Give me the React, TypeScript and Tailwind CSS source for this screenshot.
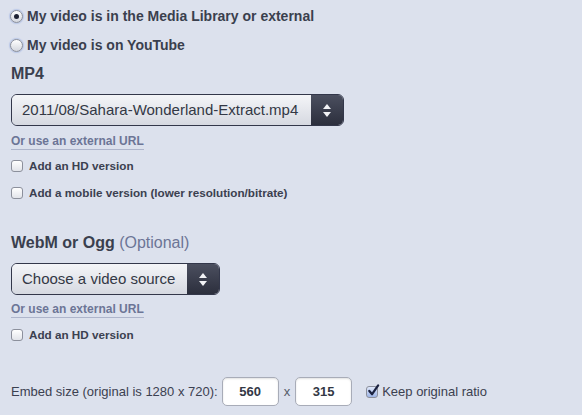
import React from 'react';

function Radio({ checked }: { checked?: boolean }) {
  return (
    <span className="flex h-[13px] w-[13px] items-center justify-center rounded-full border border-[#8a8f9c] bg-gradient-to-b from-[#ffffff] to-[#d4d7de] shadow-[0_0_1px_1px_rgba(120,150,220,0.35)]">
      {checked && <span className="h-[5px] w-[5px] rounded-full bg-[#1e2233]" />}
    </span>
  );
}

function Check({ checked }: { checked?: boolean }) {
  return (
    <span
      className={`relative flex h-[12px] w-[12px] shrink-0 items-center justify-center rounded-[3px] border border-[#8c909c] bg-gradient-to-b ${
        checked ? 'from-[#dfe8fb] to-[#9fb5e6]' : 'from-[#ffffff] to-[#e2e4ea]'
      }`}
    >
      {checked && (
        <svg viewBox="0 0 14 14" className="absolute -top-[3px] left-[0px] h-[13px] w-[13px]">
          <path d="M2.5 7.5 L5.5 11 L12 1.5" fill="none" stroke="#1b2240" strokeWidth="2.4" strokeLinecap="round" strokeLinejoin="round" />
        </svg>
      )}
    </span>
  );
}

function Select({ label, width }: { label: string; width: string }) {
  return (
    <div className={`flex h-[32px] ${width} overflow-hidden rounded-[6px] border border-[#33374a]`}>
      <div className="flex flex-1 items-center bg-gradient-to-b from-[#f4f5f8] to-[#d6d9e1] pl-[10px] text-[15px] text-[#333845]">
        {label}
      </div>
      <div className="flex w-[32px] flex-col items-center justify-center gap-[3px] bg-gradient-to-b from-[#4b4f5f] to-[#2c2f3d]">
        <svg viewBox="0 0 8 5" className="h-[5px] w-[8px]">
          <path d="M4 0 L8 5 L0 5 Z" fill="#f2f3f6" />
        </svg>
        <svg viewBox="0 0 8 5" className="h-[5px] w-[8px]">
          <path d="M0 0 L8 0 L4 5 Z" fill="#f2f3f6" />
        </svg>
      </div>
    </div>
  );
}

function Link({ mt }: { mt: string }) {
  return (
    <div className={`${mt} flex`}>
      <span className="border-b border-[#aeb5cb] pb-[1px] text-[12px] font-bold leading-[14px] text-[#6c7596]">
        Or use an external URL
      </span>
    </div>
  );
}

function CheckRow({ label }: { label: string }) {
  return (
    <label className="flex items-center gap-[6px] text-[11.7px] font-bold leading-[14px] text-[#3b4050]">
      <Check />
      {label}
    </label>
  );
}

function SizeInput({ value }: { value: string }) {
  return (
    <div className="flex h-[29px] w-[57px] items-center justify-center rounded-[5px] border border-[#a8acb8] bg-white text-[13px] font-bold text-[#333845] shadow-[inset_0_1px_2px_rgba(0,0,0,0.12)]">
      {value}
    </div>
  );
}

export default function App() {
  return (
    <div
      className="h-[415px] w-[582px] bg-[#dce1ed] pl-[11px] pt-[9px] text-[#3a3f4e]"
      style={{ fontFamily: '"Liberation Sans", Arial, sans-serif' }}
    >
      <div className="flex items-center gap-[4px] text-[14px] font-bold leading-[14px]">
        <span className="-ml-[1px]"><Radio checked /></span>
        My video is in the Media Library or external
      </div>
      <div className="mt-[15px] flex items-center gap-[4px] text-[14px] font-bold leading-[14px]">
        <span className="-ml-[1px]"><Radio /></span>
        My video is on YouTube
      </div>

      <div className="mt-[13px] text-[16px] font-bold leading-[18px]">MP4</div>
      <div className="mt-[11px]">
        <Select label="2011/08/Sahara-Wonderland-Extract.mp4" width="w-[333px]" />
      </div>
      <Link mt="mt-[8px]" />
      <div className="mt-[9px] flex flex-col gap-[13px]">
        <CheckRow label="Add an HD version" />
        <CheckRow label="Add a mobile version (lower resolution/bitrate)" />
      </div>

      <div className="mt-[34px] text-[16px] font-bold leading-[18px]">
        WebM or Ogg <span className="font-normal text-[#6c7596]">(Optional)</span>
      </div>
      <div className="mt-[11px]">
        <Select label="Choose a video source" width="w-[209px]" />
      </div>
      <Link mt="mt-[7px]" />
      <div className="mt-[10px]">
        <CheckRow label="Add an HD version" />
      </div>

      <div className="mt-[35px] flex items-center text-[13px] leading-[16px] text-[#3b4050]">
        <span>Embed size (original is 1280 x 720):</span>
        <span className="ml-[4px]"><SizeInput value="560" /></span>
        <span className="mx-[5px] text-[#555a68]">x</span>
        <SizeInput value="315" />
        <span className="ml-[14px] flex items-center gap-[4px]">
          <Check checked />
          <span>Keep original ratio</span>
        </span>
      </div>
    </div>
  );
}
